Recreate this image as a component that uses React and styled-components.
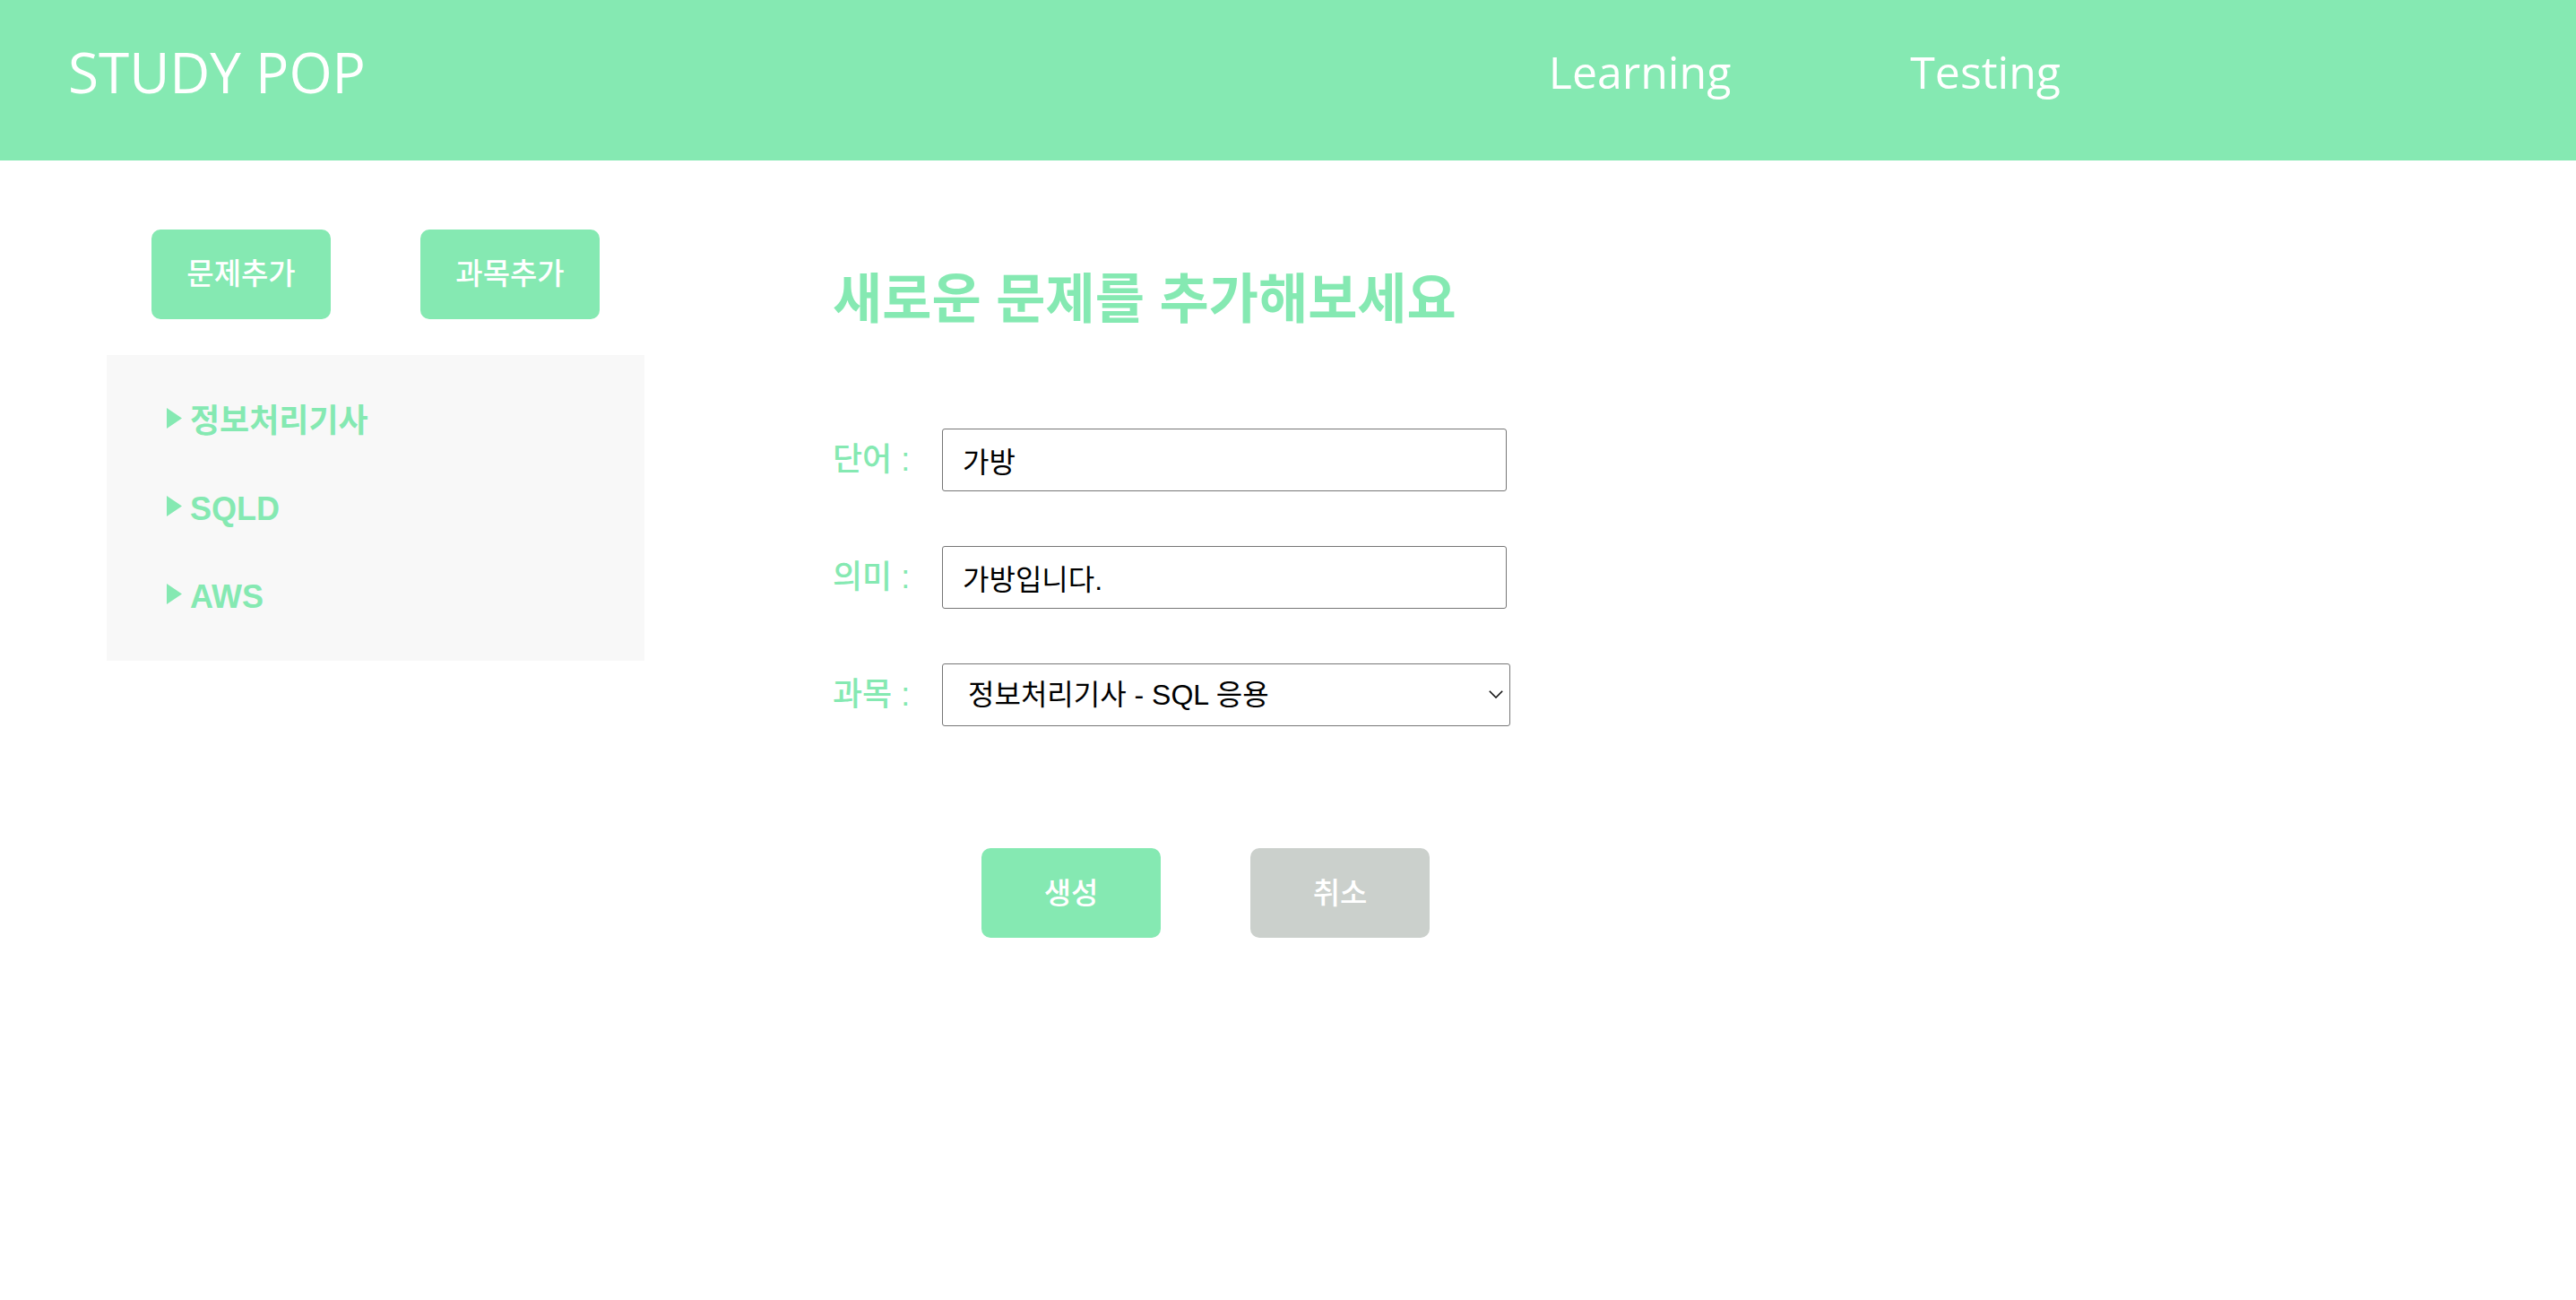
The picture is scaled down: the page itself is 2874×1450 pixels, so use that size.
import React, { useState } from "react";
import styled, { createGlobalStyle } from "styled-components";

const GREEN = "#85e9b2";
const KO = `"Liberation Sans", "Noto Sans CJK KR", sans-serif`;

const SUBJECTS = ["정보처리기사", "SQLD", "AWS"];

function App() {
  const [word, setWord] = useState("가방");
  const [meaning, setMeaning] = useState("가방입니다.");
  const [subject, setSubject] = useState("sql");

  return (
    <>
      <GlobalStyle />
      <Header>
        <Logo>STUDY POP</Logo>
        <Nav>
          <NavLink>Learning</NavLink>
          <NavLink>Testing</NavLink>
        </Nav>
      </Header>
      <Main>
        <Sidebar>
          <ButtonRow>
            <SideButton>문제추가</SideButton>
            <SideButton>과목추가</SideButton>
          </ButtonRow>
          <SubjectPanel>
            {SUBJECTS.map((el, index) => {
              return (
                <Subject key={index}>
                  <summary>{el}</summary>
                </Subject>
              );
            })}
          </SubjectPanel>
        </Sidebar>
        <Content>
          <Title>새로운 문제를 추가해보세요</Title>
          <Form>
            <Row>
              <Label>단어 :</Label>
              <Input value={word} onChange={(e) => setWord(e.target.value)} />
            </Row>
            <Row>
              <Label>의미 :</Label>
              <Input
                value={meaning}
                onChange={(e) => setMeaning(e.target.value)}
              />
            </Row>
            <Row>
              <Label>과목 :</Label>
              <SelectWrap>
                <Select
                  value={subject}
                  onChange={(e) => setSubject(e.target.value)}
                >
                  <option value="sql">정보처리기사 - SQL 응용</option>
                  <option value="sqld">SQLD</option>
                  <option value="aws">AWS</option>
                </Select>
                <Chevron viewBox="0 0 16 9">
                  <path d="M0.8 0.8 L8 8 L15.2 0.8" />
                </Chevron>
              </SelectWrap>
            </Row>
          </Form>
          <ActionRow>
            <ActionButton>생성</ActionButton>
            <ActionButton cancel>취소</ActionButton>
          </ActionRow>
        </Content>
      </Main>
    </>
  );
}
export default App;

const GlobalStyle = createGlobalStyle`
  body {
    margin: 0;
    background-color: #fff;
    font-family: ${KO};
  }
`;

const Header = styled.header`
  display: flex;
  align-items: flex-start;
  justify-content: space-between;
  box-sizing: border-box;
  height: 179px;
  padding: 0 575px 0 76px;
  background-color: ${GREEN};
`;

const Logo = styled.h1`
  margin: 38px 0 0;
  font-family: "Open Sans", sans-serif;
  font-size: 62px;
  font-weight: 400;
  line-height: normal;
  color: #fff;
`;

const Nav = styled.nav`
  display: flex;
  gap: 200px;
  margin-top: 46px;
`;

const NavLink = styled.a`
  font-family: "Open Sans", sans-serif;
  font-size: 50px;
  line-height: normal;
  color: #fff;
  cursor: pointer;
`;

const Main = styled.main`
  display: flex;
  padding-top: 77px;
`;

const Sidebar = styled.aside`
  width: 600px;
  margin-left: 119px;
`;

const ButtonRow = styled.div`
  display: flex;
  justify-content: center;
  gap: 100px;
`;

const SideButton = styled.button`
  width: 200px;
  height: 100px;
  padding: 0 0 6px;
  border: none;
  border-radius: 10px;
  background-color: ${GREEN};
  font-family: ${KO};
  font-size: 33px;
  font-weight: 500;
  color: #fff;
  cursor: pointer;
`;

const SubjectPanel = styled.div`
  display: flex;
  flex-direction: column;
  gap: 58px;
  margin-top: 40px;
  padding: 54px 0 51px 67px;
  background-color: #f8f8f8;
`;

const Subject = styled.details`
  summary {
    display: flex;
    align-items: center;
    list-style: none;
    font-family: ${KO};
    font-size: 36px;
    font-weight: 700;
    line-height: 40px;
    color: ${GREEN};
    cursor: pointer;
  }

  summary::-webkit-details-marker {
    display: none;
  }

  summary::before {
    content: "";
    flex-shrink: 0;
    width: 17px;
    height: 23px;
    margin: 0 9px 7px 0;
    background-color: ${GREEN};
    clip-path: polygon(0 0, 100% 50%, 0 100%);
  }
`;

const Content = styled.section`
  margin-left: 210px;
`;

const Title = styled.h2`
  margin: 43px 0 0;
  font-family: ${KO};
  font-size: 60px;
  font-weight: 700;
  line-height: 72px;
  color: ${GREEN};
`;

const Form = styled.form`
  display: flex;
  flex-direction: column;
  gap: 61px;
  margin-top: 107px;
`;

const Row = styled.div`
  display: flex;
  align-items: center;
`;

const Label = styled.label`
  width: 122px;
  font-family: ${KO};
  font-size: 36px;
  font-weight: 500;
  line-height: 40px;
  color: ${GREEN};
  white-space: nowrap;
`;

const Input = styled.input`
  box-sizing: border-box;
  width: 630px;
  height: 70px;
  padding: 0 22px;
  border: 1px solid #767676;
  border-radius: 3px;
  font-family: ${KO};
  font-size: 32px;
  color: #000;
`;

const SelectWrap = styled.div`
  position: relative;
  width: 634px;
  height: 70px;
`;

const Select = styled.select`
  appearance: none;
  box-sizing: border-box;
  width: 100%;
  height: 100%;
  padding: 0 40px 0 28px;
  border: 1px solid #767676;
  border-radius: 3px;
  background-color: #fff;
  font-family: ${KO};
  font-size: 32px;
  color: #000;
`;

const Chevron = styled.svg`
  position: absolute;
  top: 30px;
  right: 8px;
  width: 16px;
  height: 9px;
  fill: none;
  stroke: #111;
  stroke-width: 1.6;
  pointer-events: none;
`;

const ActionRow = styled.div`
  display: flex;
  gap: 100px;
  margin: 136px 0 0 166px;
`;

const ActionButton = styled.button`
  width: 200px;
  height: 100px;
  padding: 0 0 4px;
  border: none;
  border-radius: 10px;
  background-color: ${(props) => (props.cancel ? "#cbd0cc" : GREEN)};
  font-family: ${KO};
  font-size: 33px;
  font-weight: 500;
  color: #fff;
  cursor: pointer;
`;
